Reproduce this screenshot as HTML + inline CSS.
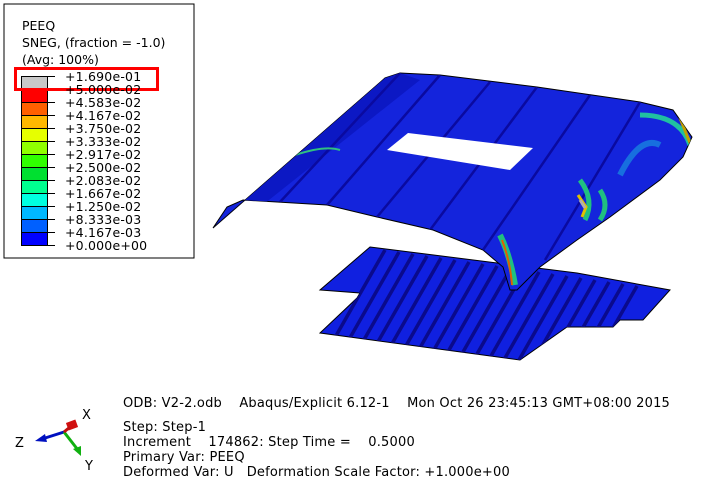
<!DOCTYPE html>
<html><head><meta charset="utf-8"><style>
html,body{margin:0;padding:0;background:#fff;width:721px;height:477px;overflow:hidden;position:relative;font-family:"DejaVu Sans","Liberation Sans",sans-serif;font-size:12.5px;color:#000}
.t{position:absolute;white-space:pre;line-height:13px}
.b{font-size:13px;letter-spacing:0.2px}
</style></head><body>
<svg width="721" height="477" style="position:absolute;left:0;top:0">
<defs>
<clipPath id="cb"><polygon points="370,247 577,273 670,290 643,320 620,320 613,327 567,327 520,360 320,333 357,298 360,293 320,290"/></clipPath>
<clipPath id="ct"><polygon points="213,228 227,207 243,200 277,202 327,205 377,217 433,230 483,250 503,267 510,290 517,290 540,267 577,240 610,217 660,180 683,157 692,137 673,110 640,102 537,87 440,75 400,73 385,78"/></clipPath>
</defs>
<rect x="4" y="4" width="190" height="254" fill="#fff" stroke="#000" stroke-width="1"/>
<polygon points="370,247 577,273 670,290 643,320 620,320 613,327 567,327 520,360 320,333 357,298 360,293 320,290" fill="#1020e0" stroke="#000" stroke-width="1"/>
<g clip-path="url(#cb)" stroke="#0a0a8c" stroke-width="3.5">
<path d="M385,250 l-60,105 M399,252 l-60,105 M413,254 l-60,105 M427,256 l-60,105 M441,258 l-60,105 M455,260 l-60,105 M469,262 l-60,105 M483,264 l-60,105 M497,266 l-60,105 M511,268 l-60,105 M525,270 l-60,105 M539,272 l-60,105 M553,274 l-60,105 M567,276 l-60,105 M581,278 l-60,105 M595,280 l-60,105 M609,282 l-60,105 M623,284 l-60,105 M637,286 l-60,105"/>
</g>
<polygon points="213,228 227,207 243,200 277,202 327,205 377,217 433,230 483,250 503,267 510,290 517,290 540,267 577,240 610,217 660,180 683,157 692,137 673,110 640,102 537,87 440,75 400,73 385,78" fill="#1424dc" stroke="#000" stroke-width="1"/>
<g clip-path="url(#ct)">
<path d="M213,228 L385,78 L400,73 L420,80 L250,215 Z" fill="#0c18c4"/>
<g stroke="#0a0aa0" stroke-width="2.5" fill="none">
<path d="M400,73 L280,202 M440,75 L327,205 M490,82 L377,217 M537,87 L430,230 M590,95 L483,250 M640,102 L545,260"/>
</g>
<path d="M580,180 q15,20 5,40 M600,190 q10,15 0,30" stroke="#20c080" stroke-width="5" fill="none"/>
<path d="M578,195 l8,12 -4,10" stroke="#e0c000" stroke-width="3" fill="none"/>
<path d="M580,200 l5,8" stroke="#b0b0b0" stroke-width="3"/>
<path d="M500,235 q10,20 15,50" stroke="#20c080" stroke-width="6" fill="none"/>
<path d="M502,240 q8,20 10,45" stroke="#e06000" stroke-width="2" fill="none"/>
<path d="M640,115 q40,0 50,30" stroke="#20c0a0" stroke-width="5" fill="none"/>
<path d="M680,118 l10,25" stroke="#c0a000" stroke-width="3"/>
<path d="M295,155 q30,-10 45,-5" stroke="#30c080" stroke-width="2" fill="none"/>
<path d="M620,175 q20,-40 40,-30" stroke="#1890e0" stroke-width="6" fill="none" opacity=".7"/>
</g>
<polygon points="387,150 408,133 533,148 510,170" fill="#fff"/>
<g stroke="#000" stroke-width="1">
<rect x="21.5" y="76.5" width="26" height="13" fill="#c8c8c8"/>
<rect x="21.5" y="89.5" width="26" height="13" fill="#ff0000"/>
<rect x="21.5" y="102.5" width="26" height="13" fill="#ff6000"/>
<rect x="21.5" y="115.5" width="26" height="13" fill="#ffb800"/>
<rect x="21.5" y="128.5" width="26" height="13" fill="#e6ff00"/>
<rect x="21.5" y="141.5" width="26" height="13" fill="#90ff00"/>
<rect x="21.5" y="154.5" width="26" height="13" fill="#30ff00"/>
<rect x="21.5" y="167.5" width="26" height="13" fill="#00e030"/>
<rect x="21.5" y="180.5" width="26" height="13" fill="#00ff90"/>
<rect x="21.5" y="193.5" width="26" height="13" fill="#00ffe0"/>
<rect x="21.5" y="206.5" width="26" height="13" fill="#00b8ff"/>
<rect x="21.5" y="219.5" width="26" height="13" fill="#0060ff"/>
<rect x="21.5" y="232.5" width="26" height="13" fill="#0000ff"/>
<path d="M47,76.5h8 M47,89.5h8 M47,102.5h8 M47,115.5h8 M47,128.5h8 M47,141.5h8 M47,154.5h8 M47,167.5h8 M47,180.5h8 M47,193.5h8 M47,206.5h8 M47,219.5h8 M47,232.5h8 M47,245.5h8"/>
</g>
<rect x="15.5" y="68.5" width="142" height="21" fill="none" stroke="#ff0000" stroke-width="3"/>
<line x1="64" y1="432" x2="42" y2="439" stroke="#0010c0" stroke-width="3"/>
<polygon points="35,441 45,434 47,442" fill="#0010c0"/>
<line x1="64" y1="432" x2="78" y2="450" stroke="#10b010" stroke-width="3"/>
<polygon points="81,456 73,449 81,446" fill="#10b010"/>
<rect x="67" y="421" width="10" height="8" fill="#d01010" transform="rotate(-20 72 425)"/>
<line x1="64" y1="432" x2="70" y2="427" stroke="#c01010" stroke-width="3"/>
</svg>
<div class="t" style="left:22px;top:19px">PEEQ</div>
<div class="t" style="left:22px;top:36px">SNEG, (fraction = -1.0)</div>
<div class="t" style="left:22px;top:53px">(Avg: 100%)</div>
<div class="t" style="left:65px;top:70px;line-height:13px;letter-spacing:0.2px">+1.690e-01
+5.000e-02
+4.583e-02
+4.167e-02
+3.750e-02
+3.333e-02
+2.917e-02
+2.500e-02
+2.083e-02
+1.667e-02
+1.250e-02
+8.333e-03
+4.167e-03
+0.000e+00</div>
<div class="t b" style="left:82px;top:409px">X</div>
<div class="t b" style="left:15px;top:437px">Z</div>
<div class="t b" style="left:85px;top:460px">Y</div>
<div class="t b" style="left:123px;top:397px">ODB: V2-2.odb    Abaqus/Explicit 6.12-1    Mon Oct 26 23:45:13 GMT+08:00 2015</div>
<div class="t b" style="left:123px;top:420px;line-height:15px">Step: Step-1
Increment    174862: Step Time =    0.5000
Primary Var: PEEQ
Deformed Var: U   Deformation Scale Factor: +1.000e+00</div>
</body></html>
